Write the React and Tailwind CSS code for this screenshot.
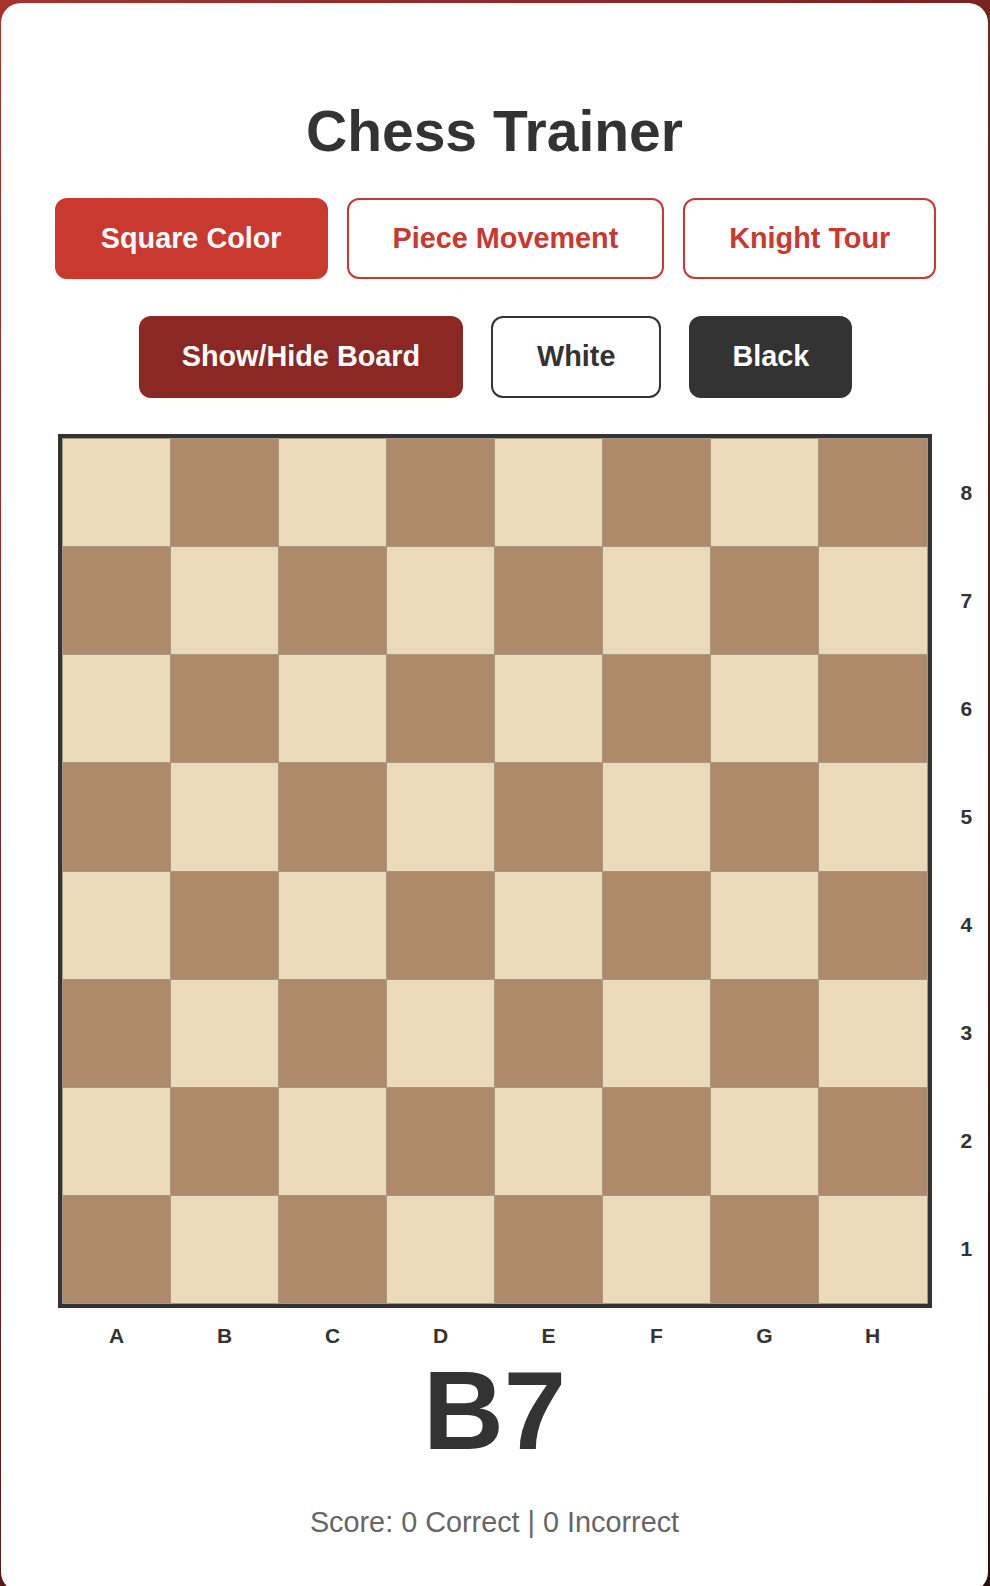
import { useState } from 'react';

const FILES = ['A', 'B', 'C', 'D', 'E', 'F', 'G', 'H'];
const RANKS = [8, 7, 6, 5, 4, 3, 2, 1];

const MODES = ['Square Color', 'Piece Movement', 'Knight Tour'];

export default function App() {
  const [mode, setMode] = useState('Square Color');
  const [showBoard, setShowBoard] = useState(true);
  const [score, setScore] = useState({ correct: 0, incorrect: 0 });
  const target = 'B7';

  const answer = (color) => {
    // a1 is dark, so file index + rank odd => light
    const file = FILES.indexOf(target[0]);
    const rank = Number(target[1]);
    const isLight = (file + rank) % 2 === 1;
    const right = (color === 'white') === isLight;
    setScore((s) => right ? { ...s, correct: s.correct + 1 } : { ...s, incorrect: s.incorrect + 1 });
  };

  return (
    <div className="min-h-screen bg-[linear-gradient(135deg,#a8322b,#2a0d0d)] pt-[3px] pl-px pr-[2px] font-['Liberation_Sans',Arial,sans-serif]">
      <div className="bg-white rounded-[20px] pt-[95px] pb-[53px]">
        <h1 className="text-center text-[57px] leading-[66px] font-bold text-[#333]">Chess Trainer</h1>

        <div className="flex justify-center gap-[19px] mt-[34px] pl-[2px]">
          {MODES.map((m) => (
            <button
              key={m}
              type="button"
              onClick={() => setMode(m)}
              className={
                mode === m
                  ? 'h-[81px] px-[44px] rounded-xl border-2 border-[#c9392f] bg-[#c9392f] text-white text-[28.8px] font-bold'
                  : 'h-[81px] px-[44px] rounded-xl border-2 border-[#c9392f] bg-white text-[#c9392f] text-[28.8px] font-bold'
              }
            >
              {m}
            </button>
          ))}
        </div>

        <div className="flex justify-center gap-7 mt-[37px] pl-[2px]">
          <button
            type="button"
            onClick={() => setShowBoard((v) => !v)}
            className="h-[82px] px-[43px] rounded-xl bg-[#8b2823] text-white text-[28.8px] font-bold"
          >
            Show/Hide Board
          </button>
          <button
            type="button"
            onClick={() => answer('white')}
            className="h-[82px] px-[44px] rounded-xl border-2 border-[#333] bg-white text-[#333] text-[28.8px] font-bold"
          >
            White
          </button>
          <button
            type="button"
            onClick={() => answer('black')}
            className="h-[82px] px-[43px] rounded-xl bg-[#333] text-white text-[28.8px] font-bold"
          >
            Black
          </button>
        </div>

        <div className="grid grid-cols-[1fr_874px_1fr] mt-9">
          <div />
          <div className={showBoard ? 'border-4 border-[#333]' : 'border-4 border-[#333] invisible'}>
            <div className="grid grid-cols-8 gap-px p-px bg-[#a39a8e]">
              {RANKS.map((rank, r) =>
                FILES.map((file, c) => (
                  <div
                    key={file + rank}
                    className={(r + c) % 2 === 0 ? 'aspect-square bg-[#eadab9]' : 'aspect-square bg-[#ae8a6a]'}
                  />
                ))
              )}
            </div>
          </div>
          <div className="grid grid-rows-8 py-[5px] pl-[29px]">
            {RANKS.map((rank) => (
              <div key={rank} className="flex items-center text-[21px] font-bold text-[#333]">
                {rank}
              </div>
            ))}
          </div>
        </div>

        <div className="grid grid-cols-[1fr_874px_1fr] mt-4">
          <div />
          <div className="grid grid-cols-8 px-[5px]">
            {FILES.map((f) => (
              <div key={f} className="text-center text-[21px] leading-[24px] font-bold text-[#333]">
                {f}
              </div>
            ))}
          </div>
          <div />
        </div>

        <div className="mt-[13px] text-center text-[112px] leading-[100px] font-bold text-[#333]">{target}</div>

        <p className="mt-[45px] text-center text-[28.8px] leading-[33px] text-[#666]">
          Score: {score.correct} Correct | {score.incorrect} Incorrect
        </p>
      </div>
    </div>
  );
}
